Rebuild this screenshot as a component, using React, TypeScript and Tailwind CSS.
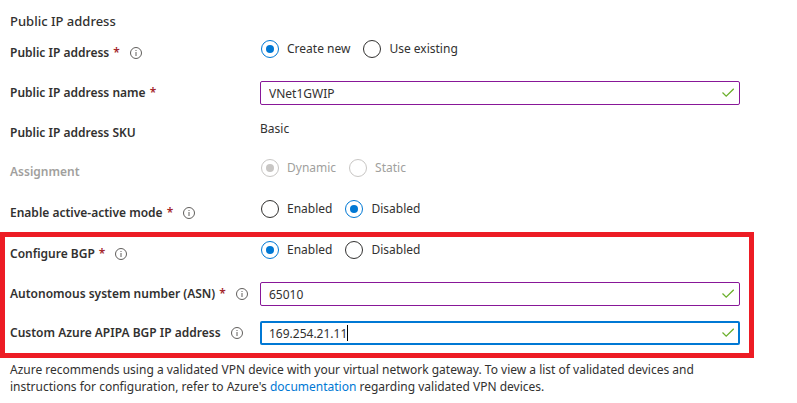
import { useId, useState, type ReactNode } from "react";

function InfoIcon() {
  return (
    <svg className="ml-2.5 size-3 shrink-0" viewBox="0 0 12 12" fill="none" role="img" aria-label="More information">
      <circle cx="6" cy="6" r="5.5" stroke="#605e5c" />
      <path d="M6 5v4" stroke="#605e5c" />
      <path d="M6 3v1" stroke="#605e5c" />
    </svg>
  );
}

function CheckIcon() {
  return (
    <svg className="pointer-events-none absolute top-1/2 right-1.5 h-3 w-3 -translate-y-1/2" viewBox="0 0 12 12" fill="none" aria-hidden="true">
      <path d="M0.5 5.5L4.2 9.2L11.7 1.8" stroke="#6bb02c" strokeWidth="1.25" />
    </svg>
  );
}

type CaptionProps = { text: string; required?: boolean; info?: boolean; muted?: boolean };

function Caption({ text, required, info, muted }: CaptionProps) {
  return (
    <span className={`flex items-center font-semibold leading-[18px] ${muted ? "text-[#a19f9d]" : "text-[#323130]"}`}>
      {text}
      {required && <span className="ml-1 text-[#a4262c]">*</span>}
      {info && <InfoIcon />}
    </span>
  );
}

type RadioRowProps = CaptionProps & { options: string[]; initial: string };

function RadioRow({ options, initial, ...caption }: RadioRowProps) {
  const id = useId();
  const [value, setValue] = useState(initial);
  return (
    <div role="radiogroup" aria-labelledby={id} className="mb-[19px] flex items-start">
      <div id={id} className="w-[250px] shrink-0 pt-1">
        <Caption {...caption} />
      </div>
      <div className="flex gap-[13px] pl-px">
        {options.map((option) => (
          <label
            key={option}
            className={`flex items-center gap-2 leading-[18px] ${caption.muted ? "text-[#a19f9d]" : "text-[#323130]"}`}
          >
            <input
              type="radio"
              name={id}
              checked={value === option}
              disabled={caption.muted}
              onChange={() => setValue(option)}
              className="grid size-[18px] shrink-0 appearance-none place-items-center rounded-full border border-[#323130] before:size-2 before:rounded-full checked:border-[#0078d4] checked:before:bg-[#0078d4] disabled:border-[#c8c6c4] disabled:checked:before:bg-[#c8c6c4]"
            />
            {option}
          </label>
        ))}
      </div>
    </div>
  );
}

type TextRowProps = CaptionProps & { initial: string; active?: boolean; last?: boolean };

function TextRow({ initial, active, last, ...caption }: TextRowProps) {
  const id = useId();
  const [value, setValue] = useState(initial);
  return (
    <div className={`flex items-center ${last ? "" : "mb-[15px]"}`}>
      <label htmlFor={id} className="w-[250px] shrink-0">
        <Caption {...caption} />
      </label>
      <div className="relative min-w-0 flex-1">
        <input
          id={id}
          type="text"
          value={value}
          onChange={(event) => setValue(event.target.value)}
          className={`block h-6 w-full rounded-[2px] bg-white pr-7 text-[#323130] outline-none ${
            active ? "border-2 border-[#0078d4] pl-[7px]" : "border border-[#881798] pl-2"
          }`}
        />
        {active && (
          <span aria-hidden="true" className="pointer-events-none absolute top-1 left-[9px] flex h-4">
            <span className="invisible">{value}</span>
            <span className="w-px bg-black" />
          </span>
        )}
        <CheckIcon />
      </div>
    </div>
  );
}

function Rows({ children }: { children: ReactNode }) {
  return <div className="pr-3.5 pl-2.5">{children}</div>;
}

export default function App() {
  return (
    <main className="min-h-screen bg-white font-['Noto_Sans','Open_Sans',sans-serif] text-[12px] text-[#323130]">
      <form className="max-w-[754px] pt-3">
        <Rows>
          <h2 className="mb-2.5 text-[13px] leading-[18px] font-medium">Public IP address</h2>
          <RadioRow text="Public IP address" required info options={["Create new", "Use existing"]} initial="Create new" />
          <TextRow text="Public IP address name" required initial="VNet1GWIP" />
          <dl className="mb-[17px] flex items-start leading-[18px]">
            <dt className="w-[250px] shrink-0 pt-1">
              <Caption text="Public IP address SKU" />
            </dt>
            <dd>Basic</dd>
          </dl>
          <RadioRow text="Assignment" muted options={["Dynamic", "Static"]} initial="Dynamic" />
          <RadioRow text="Enable active-active mode" required info options={["Enabled", "Disabled"]} initial="Disabled" />
        </Rows>
        <section aria-label="BGP settings" className="-mt-[9px] border-5 border-[#ed1c24] pt-1 pr-[9px] pb-2 pl-[5px]">
          <RadioRow text="Configure BGP" required info options={["Enabled", "Disabled"]} initial="Enabled" />
          <TextRow text="Autonomous system number (ASN)" required info initial="65010" />
          <TextRow text="Custom Azure APIPA BGP IP address" info initial="169.254.21.11" active last />
        </section>
        <p className="mt-[3px] pr-3.5 pl-2.5 leading-[17px]">
          Azure recommends using a validated VPN device with your virtual network gateway. To view a list of validated
          devices and instructions for configuration, refer to Azure's{" "}
          <a href="#documentation" className="text-[#0078d4]">
            documentation
          </a>{" "}
          regarding validated VPN devices.
        </p>
      </form>
    </main>
  );
}
